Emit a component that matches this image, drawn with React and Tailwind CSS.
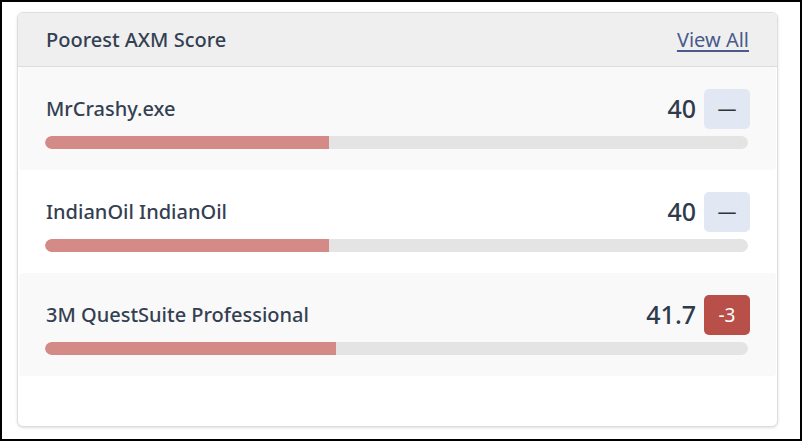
const rows = [
  { name: "MrCrashy.exe", score: "40", fill: 40.4, change: null, bg: "bg-[#f9f9f9]" },
  { name: "IndianOil IndianOil", score: "40", fill: 40.4, change: null, bg: "bg-white" },
  { name: "3M QuestSuite Professional", score: "41.7", fill: 41.4, change: "-3", bg: "bg-[#f9f9f9]" },
];

function ScoreRow({ row }) {
  return (
    <div className={`${row.bg} mx-px rounded-[3px] pl-[26px] pr-[26px] pt-[22px] pb-[21px]`}>
      <div className="flex items-center justify-between h-[40px] pl-px">
        <span className="text-[20px] font-medium text-[#343f52]">{row.name}</span>
        <div className="flex items-center gap-2">
          <span className="text-[25px] font-medium text-[#2f3a4c]">{row.score}</span>
          {row.change ? (
            <span className="w-[46px] h-[40px] rounded-[5px] bg-[#b94f49] text-white text-[19px] flex items-center justify-center">
              {row.change}
            </span>
          ) : (
            <span className="w-[46px] h-[40px] rounded-[5px] bg-[#e1e8f4] text-[#333] text-[19px] flex items-center justify-center">
              —
            </span>
          )}
        </div>
      </div>
      <div className="mt-[7px] mr-[2px] h-[13px] rounded-full bg-[#e4e4e4] overflow-hidden">
        <div
          className="h-full rounded-l-full bg-[#d48a87]"
          style={{ width: `${row.fill}%` }}
        ></div>
      </div>
    </div>
  );
}

export default function App() {
  return (
    <div
      className="w-[802px] h-[441px] border-2 border-black bg-white pl-[15px] pt-[10px]"
      style={{ fontFamily: '"Noto Sans", "Open Sans", sans-serif' }}
    >
      <div className="w-[761px] h-[415px] rounded-[6px] border border-[#dedede] bg-white shadow-sm overflow-hidden">
        {/* Header */}
        <div className="h-[54px] bg-[#efefef] border-b border-[#dcdcdc] flex items-center justify-between pl-[28px] pr-[28px]">
          <h2 className="text-[20px] font-medium text-[#343f52]">Poorest AXM Score</h2>
          <a href="#" className="text-[20px] text-[#4a5a8c] underline underline-offset-[3px]">
            View All
          </a>
        </div>

        {/* Rows */}
        <div>
          {rows.map((row, i) => (
            <ScoreRow key={i} row={row} />
          ))}
        </div>
      </div>
    </div>
  );
}
